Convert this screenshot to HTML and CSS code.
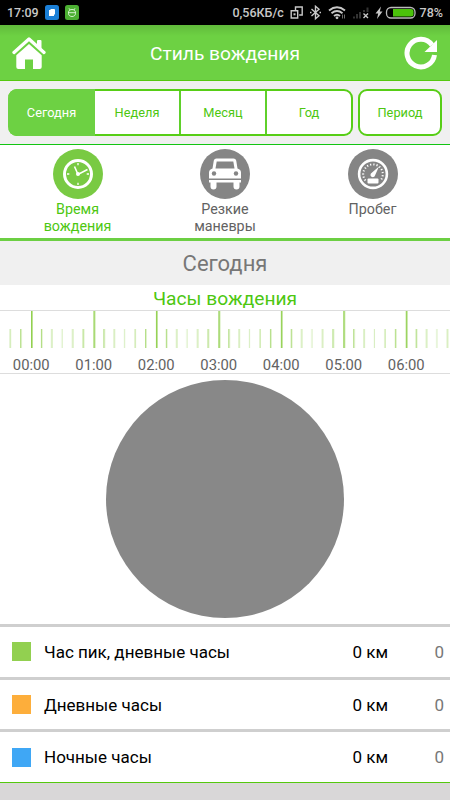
FILE: index.html
```html
<!DOCTYPE html>
<html lang="ru">
<head>
<meta charset="utf-8">
<title>Стиль вождения</title>
<link rel="stylesheet" href="styles.css">
</head>
<body>
<div class="status">
  <span class="time">17:09</span>
  <svg class="apps" width="36" height="15" viewBox="0 0 36 15">
    <rect x="0" y="0" width="14" height="15" rx="2.500" fill="#1b7fd6"/>
    <path d="M4 5h5v6H4z" fill="#fff"/><path d="M5.500 4.500H9.500v5" fill="none" stroke="#fff"/>
    <rect x="20" y="0" width="14" height="15" rx="2.500" fill="#4caf32"/>
    <path d="M24 3.300l1.200 1.700M30 3.300l-1.200 1.700M23.500 7.500c0-4 7-4 7 0v1c0 4-7 4-7 0zM23 7.700h8" fill="none" stroke="#e4f8df" stroke-width=".9"/>
  </svg>
  <span class="speed">0,56КБ/с</span>
  <svg class="sys" width="126" height="16" viewBox="0 0 126 16">
    <g fill="none" stroke="#c8c8c8" stroke-width="1.400">
      <path d="M5.500 5V2h6.700v8H9.200M1.200 5.700h6.500v7.300H1.200z"/>
      <path d="M3.500 9.300h2" stroke-width="2"/>
      <path d="M21.500 4l7.500 6.700-3.500 3V1.300l3.500 3-7.500 6.700"/>
      <path d="M20 7.500h1.500M29.500 7.500H31"/>
      <path d="M39 5.500q8-6.500 16 0M41.500 8.300q5.500-4.500 11 0M44 11q3-2.500 6 0" stroke-width="1.900"/>
      <path d="M73.500 8.500l4.500 4.500m0-4.500l-4.500 4.500"/>
    </g>
    <circle cx="47" cy="12.800" r="1.400" fill="#c8c8c8"/>
    <path d="M52.500 9.500v4M54.500 9.500v4" stroke="#888" stroke-width=".8"/>
    <path d="M64 13.500v-2M67 13.500V9M70 13.500V7M74 7V5M77.500 7V2.500" stroke="#333" stroke-width="2"/>
    <path d="M91 1.500L85.500 8.500h2.700L87 14l5.500-7.500h-2.700z" fill="#c8c8c8"/>
    <rect x="96.500" y="2.500" width="28.500" height="10.500" rx="4.500" fill="#000" stroke="#bbb" stroke-width="1.300"/>
    <path d="M103 4h18q2.500 0 2.500 2v3.500q0 2-2.500 2H103z" fill="#4bc20b"/>
  </svg>
  <span class="pct">78%</span>
</div>
<header class="bar">
  <svg class="home" width="34" height="34" viewBox="0 0 34 34">
    <path d="M2 16.500L17 3l15 13.500" fill="none" stroke="#fff" stroke-width="3.300" stroke-linecap="round" stroke-linejoin="round"/>
    <path d="M25 5q0-1 1-1h2.500q1 0 1 1v8L25 9z" fill="#fff"/>
    <path d="M4.300 19.300L17 8l12.700 11.300V31q0 2-2 2H21V23.500h-8V33H6.300q-2 0-2-2z" fill="#fff"/>
  </svg>
  <h1>Стиль вождения</h1>
  <svg class="reload" width="34" height="34" viewBox="0 0 34 34">
    <path d="M30.500 19A13.800 13.800 0 1 1 28 9" fill="none" stroke="#fff" stroke-width="5"/>
    <path d="M33 4v12H20.500z" fill="#fff"/>
  </svg>
</header>
<nav class="periods">
  <div class="group"><span class="seg on">Сегодня</span><span class="seg">Неделя</span><span class="seg">Месяц</span><span class="seg">Год</span></div>
  <div class="custom">Период</div>
</nav>
<nav class="modes">
  <div class="mode active">
    <svg width="50" height="50" viewBox="0 0 50 50">
      <circle cx="25" cy="25" r="25" fill="#79ca43"/>
      <circle cx="25" cy="25" r="13.500" fill="none" stroke="#fff" stroke-width="3"/>
      <path d="M25 14v2.300M25 33.700V36M14 25h2.300M33.700 25H36" stroke="#fff" stroke-width="1.300"/>
      <path d="M21.500 17.500L25 25.500 34.500 20.500" fill="none" stroke="#fff" stroke-width="1.600"/>
      <circle cx="25" cy="25" r="2" fill="#fff"/>
    </svg>
    <span>Время<br>вождения</span>
  </div>
  <div class="mode">
    <svg width="50" height="50" viewBox="0 0 50 50">
      <circle cx="25" cy="25" r="25" fill="#858585"/>
      <path d="M12.500 19.500l1.300-8q.5-2 2.700-2h17q2.200 0 2.700 2l1.300 8q3.500 1 3.500 4v6H9v-6q0-3 3.500-4zM9 31h32v2.500h-1.500v4q0 3-3 3t-3-3v-4h-17v4q0 3-3 3t-3-3v-4H9z" fill="#fff"/>
      <path d="M15.500 19.500l1.200-7h16.600l1.200 7z" fill="#858585"/>
      <circle cx="14" cy="24.500" r="2.200" fill="#858585"/><circle cx="36" cy="24.500" r="2.200" fill="#858585"/>
    </svg>
    <span>Резкие<br>маневры</span>
  </div>
  <div class="mode">
    <svg width="50" height="50" viewBox="0 0 50 50">
      <circle cx="25" cy="25" r="25" fill="#858585"/>
      <circle cx="25" cy="25" r="13.900" fill="none" stroke="#fff" stroke-width="2.600"/>
      <path d="M17.500 31.500A9.800 9.800 0 1 1 32.500 31.500" fill="none" stroke="#fff" stroke-width="2" stroke-dasharray="1.200 2"/>
      <path d="M31 17.500l-4 9a2.300 2.300 0 1 1-3.500-2.500z" fill="#fff"/>
      <rect x="19.500" y="29.500" width="11" height="5" rx="1" fill="#fff"/>
    </svg>
    <span>Пробег</span>
  </div>
</nav>
<h2 class="today">Сегодня</h2>
<h3 class="caption">Часы вождения</h3>
<section class="ruler">
  <svg width="450" height="38" viewBox="0 0 450 38">
    <defs>
      <pattern id="hour" x="31" y="0" width="62.460" height="38" patternUnits="userSpaceOnUse">
        <g fill="#92d050">
          <rect x="0" y="0" width="1.600" height="37"/>
          <rect x="10" y="18" width="1.200" height="19" opacity=".8"/>
          <rect x="20.300" y="18" width="1.100" height="19" opacity=".6"/>
          <rect x="30.600" y="18" width="1" height="19" opacity=".4"/>
          <rect x="41.200" y="18" width="1.100" height="19" opacity=".6"/>
          <rect x="51.700" y="18" width="1.200" height="19" opacity=".8"/>
        </g>
      </pattern>
    </defs>
    <rect width="450" height="38" fill="url(#hour)"/>
    <rect width="9" height="38" fill="#fff"/>
  </svg>
  <div class="hours"><span>00:00</span><span>01:00</span><span>02:00</span><span>03:00</span><span>04:00</span><span>05:00</span><span>06:00</span></div>
</section>
<section class="chart"><div class="pie"></div></section>
<ul class="legend">
  <li><i class="peak"></i><span class="name">Час пик, дневные часы</span><b>0 км</b><em>0</em></li>
  <li><i class="day"></i><span class="name">Дневные часы</span><b>0 км</b><em>0</em></li>
  <li><i class="night"></i><span class="name">Ночные часы</span><b>0 км</b><em>0</em></li>
</ul>
</body>
</html>
```

FILE: styles.css
```css
* { box-sizing: border-box; }
body {
  margin: 0;
  width: 450px;
  height: 800px;
  overflow: hidden;
  background: #d9d7d8;
  font-family: Roboto, "Liberation Sans", sans-serif;
}
h1, h2, h3 { margin: 0; font-weight: 400; text-align: center; }
svg { display: block; flex: none; }

.status {
  height: 25px;
  padding: 0 7px;
  display: flex;
  align-items: center;
  background: #000;
  color: #c8c8c8;
  font-size: 12.5px;
  font-weight: 500;
  white-space: nowrap;
}
.time { width: 39px; }
.speed { width: 58px; margin-left: 151px; }
.sys { margin-right: 4px; }

.bar {
  height: 56px;
  padding: 0 12px;
  display: flex;
  align-items: center;
  justify-content: space-between;
  border-bottom: 1px solid #55c80f;
  background: linear-gradient(#61bb3b, #6dd143 11px);
  color: #fff;
}
.bar h1 { font-size: 19.2px; line-height: 30px; padding-top: 3px; }

.periods {
  height: 64px;
  padding: 8px;
  display: flex;
  gap: 5px;
  background: #f0f0f0;
  border-bottom: 1px solid #12c512;
  font-size: 12.8px;
  color: #4dc711;
}
.group, .custom {
  height: 47px;
  border: 2px solid #57ce16;
  border-radius: 9px;
  background: #fff;
}
.group { width: 345px; display: flex; border-left: 0; }
.seg { flex: 1; display: flex; align-items: center; justify-content: center; }
.seg + .seg { border-left: 2px solid #5fd02b; }
.seg.on {
  flex: 0 0 87px;
  margin: -2px 0;
  border-radius: 9px 0 0 9px;
  background: #6dd143;
  color: #fff;
}
.seg.on + .seg { border-left: 0; }
.custom { flex: 1; display: flex; align-items: center; justify-content: center; }

.modes {
  height: 96px;
  padding-top: 4px;
  display: grid;
  grid-template-columns: 155px 140px 155px;
  background: #fff;
  border-bottom: 3px solid #6ccf43;
}
.mode {
  display: flex;
  flex-direction: column;
  align-items: center;
  gap: 2px;
  color: #626262;
  font-size: 14.3px;
  line-height: 16.6px;
  text-align: center;
}
.mode.active { color: #4dc711; }

.today {
  height: 44px;
  line-height: 45px;
  background: #f0f0f0;
  color: #777;
  font-size: 22px;
}
.caption {
  height: 25px;
  line-height: 28px;
  background: #fff;
  color: #4dc711;
  font-size: 19.2px;
}
.ruler {
  height: 64px;
  background: #fff;
  border-top: 1px solid #ddd;
  border-bottom: 1px solid #ddd;
}
.hours {
  display: grid;
  grid-template-columns: repeat(7, 62.5px);
  color: #626262;
  font-size: 14.8px;
  line-height: 33px;
  text-align: center;
}
.chart { height: 250px; padding-top: 6px; background: #fff; }
.pie { width: 238px; height: 238px; margin: 0 auto; border-radius: 50%; background: #888; }

.legend {
  margin: 0;
  padding: 0;
  list-style: none;
  background: #fff;
  border-bottom: 1px solid #55c80f;
  color: #000;
  font-size: 17px;
}
.legend li {
  height: 52.7px;
  padding: 0 6px 0 12px;
  display: flex;
  align-items: center;
  border-top: 3px solid #cfcfcf;
}
.legend i { width: 19px; height: 19px; margin: 0 13px 0 0; }
.peak { background: #92d050; }
.day { background: #fdae3b; }
.night { background: #3fa7f5; }
.legend .name { flex: 1; }
.legend b { font-weight: 400; width: 82px; }
.legend em { font-style: normal; color: #777; }
```
